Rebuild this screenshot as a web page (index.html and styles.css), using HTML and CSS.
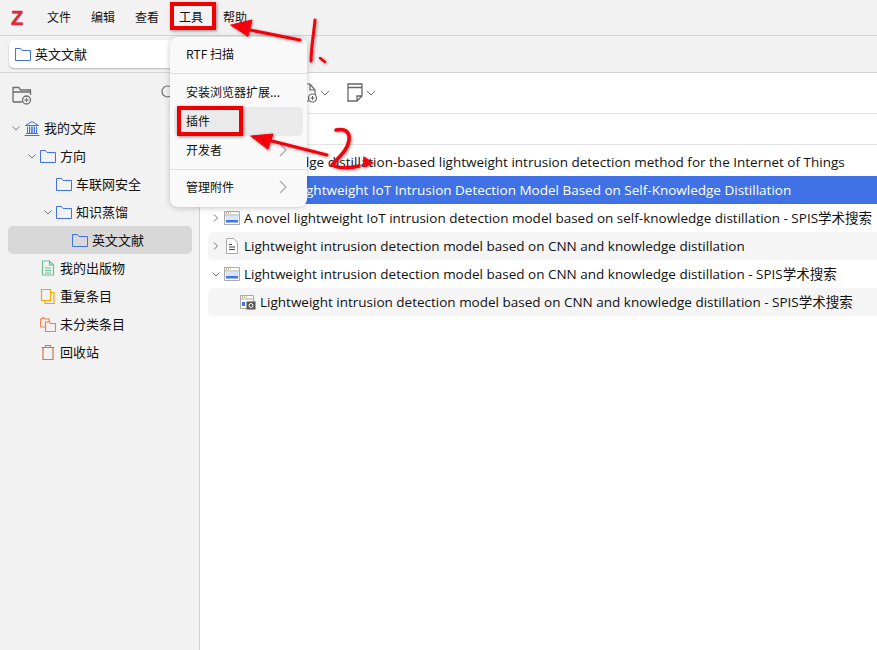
FILE: index.html
```html
<!DOCTYPE html>
<html lang="zh">
<head>
<meta charset="utf-8">
<title>Zotero</title>
<link rel="stylesheet" href="styles.css">
</head>
<body>
<div class="app">
  <header class="menubar">
    <span class="logo">Z</span>
    <nav class="menus"><span>文件</span><span>编辑</span><span>查看</span><span>工具</span><span>帮助</span></nav>
  </header>
  <div class="tabbar">
    <div class="tab">
      <svg class="ic" viewBox="0 0 16 16"><path class="fold" d="M.5 14.500v-12h5l1.500 2h8.500v10z"/></svg>
      <span>英文文献</span>
    </div>
  </div>
  <div class="body">
    <aside class="side">
      <div class="side-tools">
        <svg class="newcol" viewBox="0 0 20 20"><path d="M1 17V2.500h6l1.500 2.500h10v5M10 17H1M1 7h17" fill="none" stroke="#6b6b6b" stroke-width="1.300"/><circle cx="14.500" cy="15" r="4" fill="#f2f2f2" stroke="#6b6b6b" stroke-width="1.300"/><path d="M14.500 12.800v4.400M12.300 15h4.400" stroke="#6b6b6b"/></svg>
        <svg class="search" viewBox="0 0 16 16"><circle cx="6.500" cy="6.500" r="5.500" fill="none" stroke="#6b6b6b" stroke-width="1.200"/><path d="M10.500 10.500l4 4" stroke="#6b6b6b" stroke-width="1.200"/></svg>
      </div>
      <ul class="tree">
        <li class="n0"><svg class="tw" viewBox="0 0 8 8"><path d="M.5 2.500l3.500 3.500 3.500-3.500"/></svg><svg class="ic" viewBox="0 0 16 16"><path class="fold" d="M1.500 5.500L8 1.500l6.500 4zM.5 15.500h15M2 13.500h12M3.500 6.500v6.500M5.500 6.500v6.500M7.300 6.500v6.500M8.800 6.500v6.500M10.500 6.500v6.500M12.500 6.500v6.500"/></svg><span>我的文库</span></li>
        <li class="n1"><svg class="tw" viewBox="0 0 8 8"><path d="M.5 2.500l3.500 3.500 3.500-3.500"/></svg><svg class="ic" viewBox="0 0 16 16"><path class="fold" d="M.5 14.500v-12h5l1.500 2h8.500v10z"/></svg><span>方向</span></li>
        <li class="n2"><i class="tw"></i><svg class="ic" viewBox="0 0 16 16"><path class="fold" d="M.5 14.500v-12h5l1.500 2h8.500v10z"/></svg><span>车联网安全</span></li>
        <li class="n2"><svg class="tw" viewBox="0 0 8 8"><path d="M.5 2.500l3.500 3.500 3.500-3.500"/></svg><svg class="ic" viewBox="0 0 16 16"><path class="fold" d="M.5 14.500v-12h5l1.500 2h8.500v10z"/></svg><span>知识蒸馏</span></li>
        <li class="n3 sel"><i class="tw"></i><svg class="ic" viewBox="0 0 16 16"><path class="fold" d="M.5 14.500v-12h5l1.500 2h8.500v10z"/></svg><span>英文文献</span></li>
        <li class="n1"><i class="tw"></i><svg class="ic" viewBox="0 0 16 16"><path d="M2.500 1h7l4 4v10h-11zM9.500 1v4h4M5 8h6M5 10.500h6M5 13h6" fill="none" stroke="#6cc08b" stroke-width="1.200"/></svg><span>我的出版物</span></li>
        <li class="n1"><i class="tw"></i><svg class="ic" viewBox="0 0 16 16"><path d="M1.500 1.500h9v11h-9zM10.500 4.500h3.500v11H5V12.500" fill="none" stroke="#f5a800" stroke-width="1.200"/></svg><span>重复条目</span></li>
        <li class="n1"><i class="tw"></i><svg class="ic" viewBox="0 0 16 16"><path d="M.5 11V3.500l3-2 1.500 1.500h4v3M5.500 6h4l1 1.500h5v8h-10zM.5 11h5" fill="none" stroke="#fb7b55" stroke-width="1.200"/></svg><span>未分类条目</span></li>
        <li class="n1"><i class="tw"></i><svg class="ic" viewBox="0 0 16 16"><path d="M1.500 3.500h13M3 3.500v12h10v-12M5.500 3.500V1.500h5v2" fill="none" stroke="#cc7a55" stroke-width="1.200"/></svg><span>回收站</span></li>
      </ul>
    </aside>
    <main class="main">
      <div class="toolbar">
        <svg class="tool page" viewBox="0 0 17 20"><path d="M1 1h9l5 6v6M1 1v17h8M10 1v6h5" fill="none" stroke="#666" stroke-width="1.200"/><circle cx="12.500" cy="15" r="4" fill="#fff" stroke="#666" stroke-width="1.200"/><path d="M12.500 13v4M10.500 15h4" stroke="#666"/></svg>
        <svg class="chev" viewBox="0 0 10 10"><path d="M1 3l4 4 4-4"/></svg>
        <svg class="tool note" viewBox="0 0 16 20"><path d="M1 1h14v12l-5 5H1zM1 4.500h14M10 18v-5h5" fill="none" stroke="#666" stroke-width="1.300"/></svg>
        <svg class="chev" viewBox="0 0 10 10"><path d="M1 3l4 4 4-4"/></svg>
      </div>
      <div class="colhead"></div>
      <ul class="rows">
        <li class="row"><i class="tw"></i><i class="ic"></i><span>A knowledge distillation-based lightweight intrusion detection method for the Internet of Things</span></li>
        <li class="row active"><i class="tw"></i><i class="ic"></i><span>A Novel Lightweight IoT Intrusion Detection Model Based on Self-Knowledge Distillation</span></li>
        <li class="row"><svg class="tw" viewBox="0 0 8 8"><path d="M2 .5l3.500 3.500-3.500 3.500"/></svg><svg class="ic" viewBox="0 0 16 16"><use href="#web"/></svg><span>A novel lightweight IoT intrusion detection model based on self-knowledge distillation - SPIS学术搜索</span></li>
        <li class="row stripe"><svg class="tw" viewBox="0 0 8 8"><path d="M2 .5l3.500 3.500-3.500 3.500"/></svg><svg class="ic" viewBox="0 0 16 16"><path d="M2.500.5h7l4 4v11h-11z" fill="#fff" stroke="#aaa"/><path d="M5 6.500h3M5 9h6M5 11.500h6" stroke="#444"/></svg><span>Lightweight intrusion detection model based on CNN and knowledge distillation</span></li>
        <li class="row"><svg class="tw" viewBox="0 0 8 8"><path d="M.5 2.500l3.500 3.500 3.500-3.500"/></svg><svg class="ic" viewBox="0 0 16 16"><use href="#web"/></svg><span>Lightweight intrusion detection model based on CNN and knowledge distillation - SPIS学术搜索</span></li>
        <li class="row stripe child"><svg class="ic" viewBox="0 0 16 16"><path d="M.5 1.500h13v13H.5z" fill="#fff" stroke="#aaa"/><path d="M2 3h1" stroke="#d33"/><path d="M4 3h1" stroke="#3a3"/><path d="M6 3h1" stroke="#da3"/><path d="M.5 5h13" stroke="#aaa"/><path d="M2 8h3v4H2z" fill="#4072e5"/><path d="M6.500 7.500h9v8h-9z" fill="#555"/><circle cx="11" cy="11.500" r="2" fill="none" stroke="#fff"/></svg><span>Lightweight intrusion detection model based on CNN and knowledge distillation - SPIS学术搜索</span></li>
      </ul>
    </main>
  </div>

  <svg class="defs" width="0" height="0"><defs><g id="web"><path d="M.5 1.500h15v13H.5z" fill="#fff" stroke="#aaa"/><path d="M2 3h1" stroke="#d33"/><path d="M4 3h1" stroke="#3a3"/><path d="M6 3h1" stroke="#da3"/><path d="M.5 5h15" stroke="#aaa"/><path d="M1 6h14v4H1z" fill="#dbe6fb"/><path d="M2 10h12v2.500H2z" fill="#4072e5"/></g></defs></svg>

  <div class="popup">
    <div class="mi first">RTF 扫描</div>
    <hr class="sep-a">
    <div class="mi">安装浏览器扩展...</div>
    <div class="mi hover">插件</div>
    <div class="mi">开发者<svg class="arrow" viewBox="0 0 8 14"><path d="M1 1l6 6-6 6"/></svg></div>
    <hr class="sep-b">
    <div class="mi">管理附件<svg class="arrow" viewBox="0 0 8 14"><path d="M1 1l6 6-6 6"/></svg></div>
  </div>

  <div class="redbox box1"></div>
  <div class="redbox box2"></div>
  <svg class="ink" viewBox="0 0 877 650" width="877" height="650">
    <defs><filter id="sh" x="-10%" y="-10%" width="120%" height="120%"><feDropShadow dx="1" dy="1" stdDeviation="1.500" flood-color="#000" flood-opacity=".4"/></filter></defs>
    <g filter="url(#sh)" fill="none" stroke="#f40009" stroke-linecap="round" stroke-linejoin="round">
      <path d="M300 40L245 29" stroke-width="3"/>
      <path d="M231 25L252 20L248 36z" fill="#f40009" stroke-width="1"/>
      <path d="M315 20C314 32 311 48 311 61" stroke-width="3"/>
      <path d="M320 58L325 62" stroke-width="2.500"/>
      <path d="M327 155L268 140" stroke-width="3"/>
      <path d="M251 136L273 134L268 149z" fill="#f40009" stroke-width="1"/>
      <path d="M336 130C345 128 350 132 349 140C348 150 338 158 332 165C340 169 352 168 359 166" stroke-width="3.500"/>
      <path d="M364 157L373 163L364 167z" fill="#f40009" stroke-width="1"/>
    </g>
  </svg>
</div>
</body>
</html>
```

FILE: styles.css
```css
* { box-sizing: border-box; }
html, body { margin: 0; padding: 0; }
body { font-family: "Noto Sans CJK SC", "Noto Sans", sans-serif; font-size: 13px; color: #111; background: #fff; }
ul { list-style: none; margin: 0; padding: 0; }
.app { position: relative; width: 877px; height: 650px; overflow: hidden; display: flex; flex-direction: column; }
.menubar { height: 36px; flex: none; background: #f2f2f2; border-bottom: 1px solid #d4d4d4; display: flex; align-items: center; padding-left: 11px; }
.logo { font: 900 20px/1 "Liberation Sans", sans-serif; color: #db2c3a; width: 36px; -webkit-text-stroke: .6px #db2c3a; }
.menus { display: flex; gap: 20px; line-height: 18px; margin-bottom: 2px; }
.menus span { width: 24px; white-space: nowrap; font-size: 12px; }
.tabbar { height: 37px; flex: none; background: #f2f2f2; border-bottom: 1px solid #d4d4d4; padding: 4px 0 0 9px; }
.tab { width: 180px; height: 28px; background: #fff; border-radius: 5px; box-shadow: 0 1px 2px rgba(0,0,0,.25); display: flex; align-items: center; gap: 4px; padding-left: 6px; font-size: 13px; }
.tab span { margin-bottom: 2px; }
.ic { width: 16px; height: 16px; flex: none; display: block; }
.fold { fill: none; stroke: #4072e5; }
.tw { width: 8px; height: 8px; flex: none; display: block; fill: none; stroke: #777; }
.body { flex: 1; display: flex; min-height: 0; }
.side { width: 200px; flex: none; background: #f2f2f2; border-right: 1px solid #d4d4d4; }
.side-tools { height: 41px; padding: 12px 0 0 12px; display: flex; align-items: flex-start; gap: 129px; }
.newcol { width: 20px; height: 20px; display: block; flex: none; }
.search { width: 16px; height: 16px; display: block; flex: none; }
.tree { padding: 0 7px 0 8px; }
.tree li { height: 28px; display: flex; align-items: center; gap: 4px; border-radius: 5px; font-size: 13px; }
.tree span { margin-bottom: 2px; }
.n0 { padding-left: 4px; }
.n1 { padding-left: 20px; }
.n2 { padding-left: 36px; }
.n3 { padding-left: 52px; }
.tree .sel { background: #d8d8d8; }
.main { flex: 1; min-width: 0; background: #fff; }
.toolbar { height: 41px; border-bottom: 1px solid #e3e3e3; display: flex; align-items: center; padding-left: 100px; gap: 3px; }
.tool { height: 20px; display: block; flex: none; }
.page { width: 17px; }
.note { width: 16px; margin-left: 14px; }
.chev { width: 10px; height: 10px; display: block; fill: none; stroke: #777; flex: none; }
.colhead { height: 31px; border-bottom: 1px solid #e3e3e3; }
.rows { padding: 3px 0 0 8px; }
.row { height: 28px; display: flex; align-items: center; gap: 4px; padding-left: 4px; border-radius: 5px 0 0 5px; white-space: nowrap; font: 13.5px/18px "Open Sans", "Noto Sans CJK SC", sans-serif; overflow: hidden; }
.stripe { background: #f5f5f5; }
.active { background: #4072e5; color: #fff; }
.child { padding-left: 32px; }
.defs { position: absolute; }
.popup { position: absolute; left: 170px; top: 37px; width: 137px; height: 170px; background: #f9f9f9; border-radius: 8px; box-shadow: 0 1px 6px rgba(0,0,0,.22); padding: 4px; font-size: 12px; }
.mi { position: relative; height: 29px; line-height: 28px; padding-left: 12px; border-radius: 5px; white-space: nowrap; }
.first { height: 27px; line-height: 26px; }
.hover { background: #eaeaea; }
.popup hr { border: 0; border-top: 1px solid #e2e2e2; margin: 0 -4px; }
.sep-a { margin-top: 5px !important; margin-bottom: 4px !important; }
.sep-b { margin-top: 4px !important; margin-bottom: 3px !important; }
.arrow { position: absolute; right: 16px; top: 7px; width: 8px; height: 14px; fill: none; stroke: #aaa; stroke-width: 1.200; }
.redbox { position: absolute; border: 4px solid #ee0000; box-shadow: 1px 1px 3px rgba(0,0,0,.45); }
.box1 { left: 170px; top: 2px; width: 46px; height: 28px; }
.box2 { left: 177px; top: 106px; width: 66px; height: 30px; }
.ink { position: absolute; left: 0; top: 0; pointer-events: none; }
```
